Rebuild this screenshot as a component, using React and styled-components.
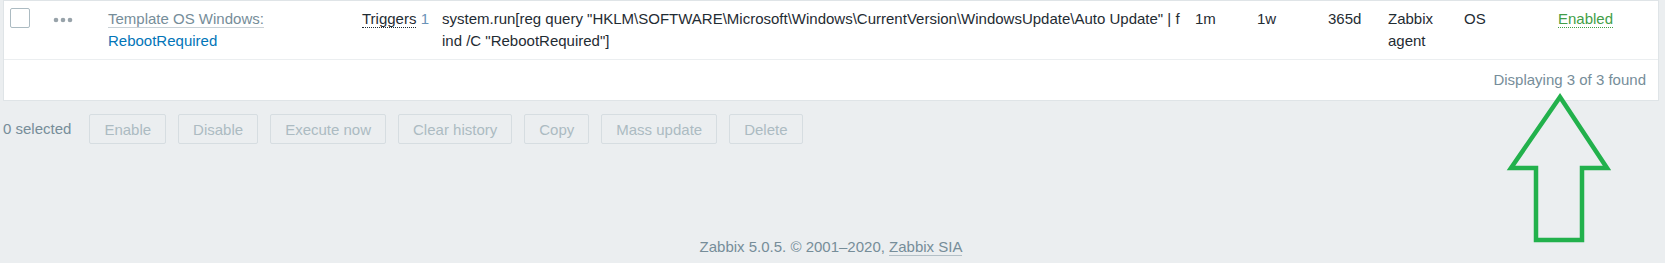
import React from 'react'
import styled, { createGlobalStyle } from 'styled-components'

const GlobalStyle = createGlobalStyle`
  html, body {
    margin: 0;
    padding: 0;
    background: #ebeef0;
  }
  body {
    font-family: "Liberation Sans", Arial, sans-serif;
    font-size: 15px;
    line-height: 22px;
    color: #1f2c33;
  }
`;

const columns = '43px 55px 254px 80px 753px 62px 71px 60px 76px 94px 1fr';

const ArrowIcon = () => (
  <svg width="120" height="170" viewBox="0 0 120 170">
    <polygon
      points="60,4 11,75 36,75 36,147 82,147 82,75 107,75"
      fill="none"
      stroke="#22b14c"
      strokeWidth="4.5"
      strokeLinejoin="miter"
    />
  </svg>
);

const MoreIcon = () => (
  <svg width="20" height="6" viewBox="0 0 20 6">
    <circle cx="3" cy="3" r="2.3" fill="#98a3aa" />
    <circle cx="10" cy="3" r="2.3" fill="#98a3aa" />
    <circle cx="17" cy="3" r="2.3" fill="#98a3aa" />
  </svg>
);

const App = () => {
  return (
    <Page>
      <GlobalStyle />
      <Panel>
        <Row>
          <Cell>
            <Checkbox />
          </Cell>
          <Cell>
            <More>
              <MoreIcon />
            </More>
          </Cell>
          <Cell>
            <GreyLink>Template OS Windows:</GreyLink>{' '}
            <Link>RebootRequired</Link>
          </Cell>
          <Cell>
            <Dotted>Triggers</Dotted> <Count>1</Count>
          </Cell>
          <Cell>
            system.run[reg query "HKLM\SOFTWARE\Microsoft\Windows\CurrentVersion\WindowsUpdate\Auto Update" | f
            <br />
            ind /C "RebootRequired"]
          </Cell>
          <Cell>1m</Cell>
          <Cell>1w</Cell>
          <Cell>365d</Cell>
          <Cell>Zabbix agent</Cell>
          <Cell>OS</Cell>
          <Cell>
            <Status>Enabled</Status>
          </Cell>
        </Row>
        <TableFooter>Displaying 3 of 3 found</TableFooter>
      </Panel>

      <ActionBar>
        <Selected>0 selected</Selected>
        <Button disabled>Enable</Button>
        <Button disabled>Disable</Button>
        <Button disabled>Execute now</Button>
        <Button disabled>Clear history</Button>
        <Button disabled>Copy</Button>
        <Button disabled>Mass update</Button>
        <Button disabled>Delete</Button>
      </ActionBar>

      <Footer>
        Zabbix 5.0.5. © 2001–2020, <FooterLink>Zabbix SIA</FooterLink>
      </Footer>

      <Annotation>
        <ArrowIcon />
      </Annotation>
    </Page>
  );
}

export default App;


const Page = styled.div`
position: relative;
min-height: 263px;
display: flex;
flex-direction: column;
padding: 0 6px 0 3px;
box-sizing: border-box;
`;

const Panel = styled.div`
background: #fff;
border: 1px solid #dfe4e7;
`;

const Row = styled.div`
display: grid;
grid-template-columns: ${columns};
padding: 7px 0 7px 6px;
border-bottom: 1px solid #ebeef0;
`;

const Cell = styled.div`
min-width: 0;
padding-right: 10px;
`;

const Checkbox = styled.span`
display: block;
width: 18px;
height: 18px;
border: 1px solid #acbbc2;
border-radius: 2px;
background: #fff;
`;

const More = styled.span`
display: block;
padding-top: 9px;
line-height: 0;
`;

const GreyLink = styled.span`
color: #768d99;
border-bottom: 1px solid #c9d1d6;
`;

const Link = styled.span`
color: #0275b8;
`;

const Dotted = styled.span`
border-bottom: 1px dotted #1f2c33;
`;

const Count = styled.span`
color: #6b93b8;
`;

const Status = styled.span`
color: #429e47;
border-bottom: 1px dotted #429e47;
`;

const TableFooter = styled.div`
text-align: right;
color: #768d99;
padding: 9px 12px 9px 0;
`;

const ActionBar = styled.div`
display: flex;
align-items: center;
gap: 12px;
margin-top: 13px;
`;

const Selected = styled.span`
color: #768d99;
margin-right: 6px;
`;

const Button = styled.button`
height: 30px;
padding: 0 14px;
font-family: inherit;
font-size: 15px;
color: #acbbc2;
background: #ebeef0;
border: 1px solid #d6dde1;
border-radius: 2px;
`;

const Footer = styled.div`
margin-top: auto;
text-align: center;
color: #768d99;
padding-bottom: 5px;
`;

const FooterLink = styled.span`
border-bottom: 1px solid #b4c0c7;
`;

const Annotation = styled.div`
position: absolute;
left: 1500px;
top: 93px;
line-height: 0;
pointer-events: none;
`;
